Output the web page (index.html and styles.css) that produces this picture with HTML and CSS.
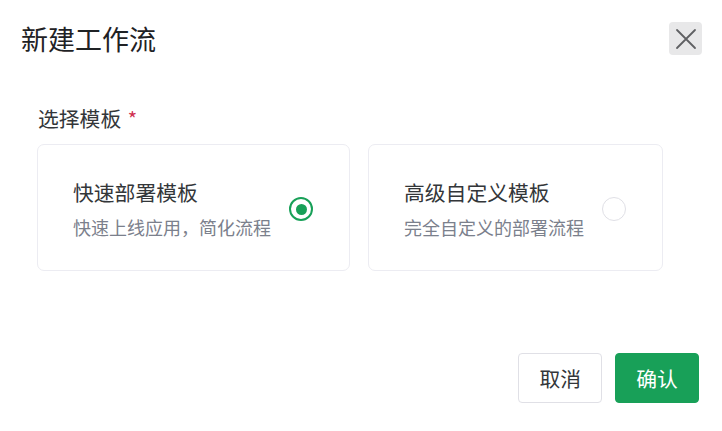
FILE: index.html
```html
<!DOCTYPE html>
<html lang="zh-CN">
<head>
<meta charset="utf-8">
<title>新建工作流</title>
<link rel="stylesheet" href="styles.css">
</head>
<body>
<div class="dialog">
  <div class="header">
    <div class="title">新建工作流</div>
    <button class="close" aria-label="关闭">
      <svg width="22" height="22" viewBox="0 0 22 22"><path d="M2 2 L20 20 M20 2 L2 20" stroke="#5f6063" stroke-width="1.8" fill="none" stroke-linecap="round"/></svg>
    </button>
  </div>
  <div class="body">
    <div class="label">选择模板 <span class="req">*</span></div>
    <div class="options">
      <div class="card">
        <div class="text">
          <div class="card-title">快速部署模板</div>
          <div class="card-desc">快速上线应用，简化流程</div>
        </div>
        <span class="radio checked"></span>
      </div>
      <div class="card">
        <div class="text">
          <div class="card-title">高级自定义模板</div>
          <div class="card-desc">完全自定义的部署流程</div>
        </div>
        <span class="radio"></span>
      </div>
    </div>
  </div>
  <div class="footer">
    <button class="btn">取消</button>
    <button class="btn primary">确认</button>
  </div>
</div>
</body>
</html>
```
FILE: styles.css
```css
html, body {
  margin: 0;
  padding: 0;
  background: #fff;
}
body {
  font-family: "Noto Sans CJK SC", "Noto Sans", sans-serif;
  color: #1f2225;
}
.dialog {
  width: 722px;
  height: 431px;
  box-sizing: border-box;
  padding: 22px 20px 0 20px;
}
.header {
  display: flex;
  align-items: center;
  justify-content: space-between;
  height: 33px;
}
.title {
  font-size: 27px;
  line-height: 33px;
  color: #1f2225;
  padding-left: 1px;
}
.close {
  width: 33px;
  height: 33px;
  border: none;
  border-radius: 4px;
  background: #e8e8e9;
  padding: 0;
  display: flex;
  align-items: center;
  justify-content: center;
}
.body {
  padding: 49px 0 0 17px;
}
.label {
  font-size: 20.8px;
  line-height: 29px;
  color: #333639;
  padding-left: 1px;
  margin-bottom: 11px;
}
.req {
  color: #d03050;
  font-size: 20px;
  margin-left: 2px;
}
.options {
  display: flex;
  gap: 18px;
  align-items: flex-start;
}
.card {
  display: flex;
  align-items: center;
  gap: 18px;
  border: 1px solid #ececf2;
  border-radius: 7px;
  padding: 32px 36px 29px 35px;
}
.card-title {
  font-size: 20.8px;
  line-height: 31px;
  color: #333639;
}
.card-desc {
  font-size: 18px;
  line-height: 28px;
  margin-top: 5px;
  color: #7b808c;
}
.radio {
  width: 24px;
  height: 24px;
  box-sizing: border-box;
  border-radius: 50%;
  border: 1.5px solid #e0e0e6;
  display: flex;
  align-items: center;
  justify-content: center;
  flex-shrink: 0;
}
.radio.checked {
  border: 2px solid #18a058;
}
.radio.checked::after {
  content: "";
  width: 11px;
  height: 11px;
  border-radius: 50%;
  background: #18a058;
}
.footer {
  display: flex;
  justify-content: flex-end;
  gap: 13px;
  margin-top: 82px;
  padding-right: 3px;
}
.btn {
  height: 50px;
  padding: 0 20px;
  font-family: "Noto Sans CJK SC", "Noto Sans", sans-serif;
  font-size: 20.8px;
  border: 1px solid #e0e0e6;
  border-radius: 4px;
  background: #fff;
  color: #333639;
  min-width: 83px;
}
.btn.primary {
  background: #18a058;
  border-color: #18a058;
  color: #fff;
  min-width: 84px;
}
```
